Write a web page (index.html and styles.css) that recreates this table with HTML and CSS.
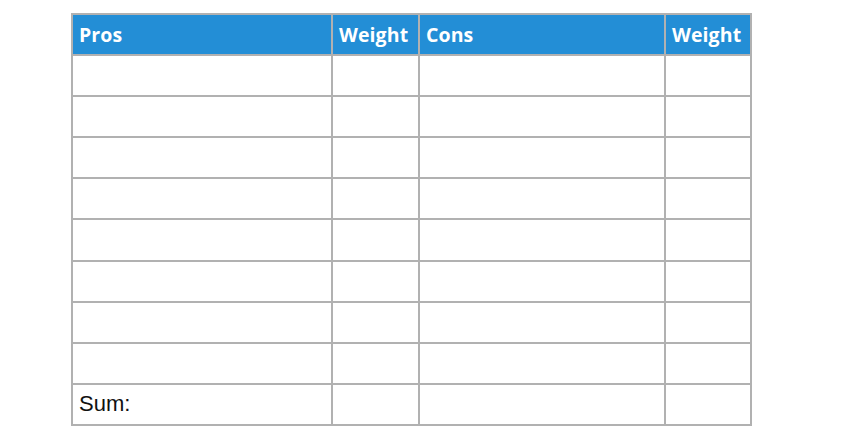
FILE: index.html
```html
<!DOCTYPE html>
<html>
<head>
<meta charset="utf-8">
<link rel="stylesheet" href="styles.css">
</head>
<body>
<table class="pc">
  <colgroup>
    <col class="c-pros"><col class="c-w"><col class="c-cons"><col class="c-w2">
  </colgroup>
  <thead>
    <tr><th>Pros</th><th>Weight</th><th>Cons</th><th>Weight</th></tr>
  </thead>
  <tbody>
    <tr><td></td><td></td><td></td><td></td></tr>
    <tr><td></td><td></td><td></td><td></td></tr>
    <tr><td></td><td></td><td></td><td></td></tr>
    <tr><td></td><td></td><td></td><td></td></tr>
    <tr><td></td><td></td><td></td><td></td></tr>
    <tr><td></td><td></td><td></td><td></td></tr>
    <tr><td></td><td></td><td></td><td></td></tr>
    <tr><td></td><td></td><td></td><td></td></tr>
    <tr><td class="sum">Sum:</td><td></td><td></td><td></td></tr>
  </tbody>
</table>
</body>
</html>
```
FILE: styles.css
```css
html, body {
  margin: 0;
  padding: 0;
  background: #fff;
}
body {
  padding: 13px 0 0 71px;
}
.pc {
  border-collapse: collapse;
  table-layout: fixed;
  width: 679px;
}
.c-pros { width: 260px; }
.c-w { width: 87px; }
.c-cons { width: 246px; }
.c-w2 { width: 86px; }
.pc th, .pc td {
  border: 2px solid #b1b1b1;
  padding: 0 6px;
  text-align: left;
  height: 39.1px;
  line-height: 20px;
}
.pc th {
  background: #238ed6;
  color: #fff;
  font-family: "Open Sans", sans-serif;
  font-weight: 700;
  font-size: 19.5px;
  letter-spacing: 0.1px;
}
.pc td {
  font-family: "Liberation Sans", Arial, sans-serif;
  font-size: 22px;
  color: #111;
}
```
